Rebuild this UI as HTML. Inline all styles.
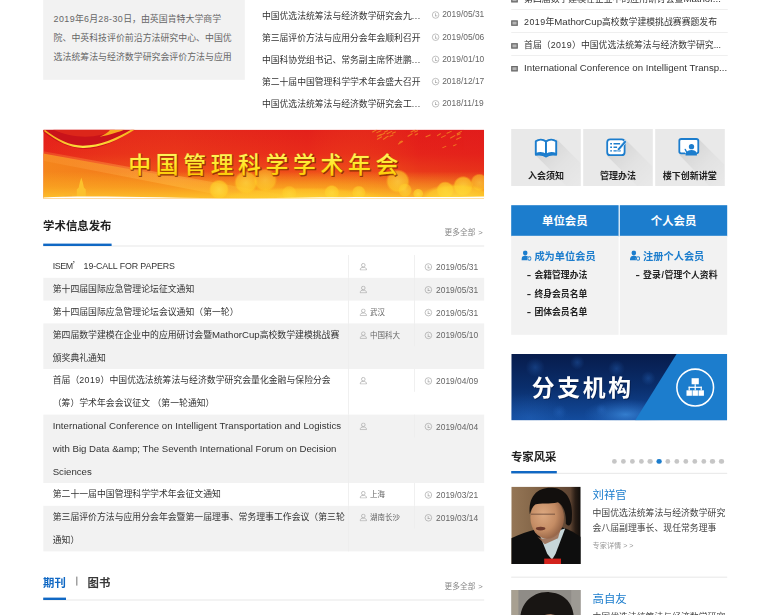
<!DOCTYPE html>
<html lang="zh-CN">
<head>
<meta charset="utf-8">
<title>中国优选法统筹法与经济数学研究会</title>
<style>
html,body{margin:0;padding:0;background:#fff;}
body{width:768px;height:615px;overflow:hidden;position:relative;}
#pg{position:absolute;left:0;top:0;width:1280px;height:1025px;transform:scale(0.6);transform-origin:0 0;
 font-family:"Liberation Sans","Noto Sans CJK SC",sans-serif;font-size:14.7px;color:#333;}
#pg *{box-sizing:border-box;}
.abs{position:absolute;}
.nw{white-space:nowrap;}
.dg{letter-spacing:0.7px;}
.la{font-size:1.09em;line-height:0;}
.el{letter-spacing:0.9px;}
.cap{letter-spacing:-0.7px;}
.cj{font-family:'Noto Sans CJK SC',sans-serif;line-height:0;}
/* top-left gray intro box */
#intro{left:71.8px;top:-40px;width:336px;height:173px;background:#f2f2f2;}
#intro p{position:absolute;left:17.5px;top:54.8px;margin:0;width:310px;line-height:32px;font-size:14.85px;color:#666;}
/* news list */
#news{left:436.5px;top:7.6px;width:370px;}
#news .r{height:37px;line-height:37px;position:relative;white-space:nowrap;color:#333;font-size:14.7px;}
#news .d{position:absolute;left:283.5px;top:-1.2px;font-size:14px;color:#666;}
.clk{display:inline-block;width:12px;height:12px;border:1.3px solid #999;border-radius:50%;position:relative;vertical-align:-1.5px;margin-right:5px;}
.clk:before{content:"";position:absolute;left:4px;top:2px;width:3px;height:4px;border-left:1.2px solid #999;border-bottom:1.2px solid #999;}
/* right list */
#rlist{left:851.5px;top:-22px;width:361px;}
#rlist .r{height:38.3px;line-height:41px;border-bottom:1px solid #e5e5e5;white-space:nowrap;font-size:14.75px;color:#333;padding-left:22px;position:relative;}
#rlist .r:last-child{border-bottom:0;}
#rlist .r i{position:absolute;left:0;top:17.3px;width:11.5px;height:9px;background:#b5b5b5;border:2.2px solid #6a6a6a;}
/* banner */
#banner{left:71.8px;top:215.5px;width:735px;height:115.5px;overflow:hidden;}
/* three buttons */
.btn3{top:214.5px;width:116px;height:95px;background:#e9e9e9;overflow:hidden;}
.btn3 span{position:absolute;left:0;width:100%;top:69px;text-align:center;font-weight:bold;font-size:15px;color:#222;line-height:20px;}
/* headings */
.hd{font-weight:bold;font-size:19px;color:#222;line-height:30px;white-space:nowrap;}
.more{font-size:12.8px;color:#888;white-space:nowrap;line-height:20px;word-spacing:1.5px;}
.hl{height:1.5px;background:#ebebeb;}
.hb{height:3.7px;background:#1068c4;}
/* table */
#tb{left:71.8px;top:425px;width:735px;}
#tb .row{position:relative;line-height:38px;}
#tb .row.g{background:#f2f2f2;}
#tb .t{padding-left:16px;width:500px;color:#333;font-size:14.75px;position:relative;top:0.2px;}
#tb .c2{position:absolute;left:508px;top:0;width:110px;height:38px;border-left:1px solid #e6e6e6;padding-left:18px;font-size:12.5px;color:#666;white-space:nowrap;line-height:40.4px;}
#tb .c3{position:absolute;left:618px;top:0;width:117px;height:38px;border-left:1px solid #e6e6e6;padding-left:17px;line-height:40.4px;font-size:14px;color:#666;white-space:nowrap;}
#tb .row .c2{height:100%;}
#tb .row.g .c2,#tb .row.g .c3{border-left-color:#ebebeb;}
#tb .clk{margin-right:7px;vertical-align:-0.6px;}
.usr{display:inline-block;width:13px;height:13px;position:relative;vertical-align:-2px;margin-right:5px;}
/* member box */
.tab{top:342px;height:51.5px;background:#1c7dcd;color:#fff;font-weight:bold;font-size:19px;text-align:center;line-height:54.5px;}
.pan{top:393px;height:165px;background:#f2f2f2;}
.pan .h{position:absolute;left:17.5px;top:20.7px;font-weight:bold;font-size:17px;color:#1c7dcd;white-space:nowrap;line-height:30px;}
.pi{vertical-align:-1px;margin-right:4.5px;}
.ds2{display:inline-block;width:12.5px;transform:scaleX(1.5);transform-origin:0 50%;}
.pan .li{position:absolute;left:26.5px;font-weight:bold;font-size:14.7px;color:#222;white-space:nowrap;line-height:30px;}
/* branch banner */
#branch{left:851.7px;top:589.5px;width:360.8px;height:111px;overflow:hidden;}
/* experts */
.dot{position:absolute;top:764.8px;width:8.4px;height:8.4px;border-radius:50%;background:#c6c6c6;}
.ph{width:116px;height:130px;overflow:hidden;}
.nm{font-size:19px;color:#1c7dcd;white-space:nowrap;line-height:30px;}
.ds{font-size:14.75px;color:#444;line-height:24.2px;width:232px;}
.dt{font-size:12px;color:#999;white-space:nowrap;line-height:20px;}
</style>
</head>
<body>
<div id="pg">

<!-- TOP LEFT -->
<div id="intro" class="abs"><p class="nw"><span class="dg">2019</span>年<span class="dg">6</span>月<span class="dg">28-30</span>日，由英国肯特大学商学<br>院、中英科技评价前沿方法研究中心、中国优<br>选法统筹法与经济数学研究会评价方法与应用</p></div>

<!-- NEWS -->
<div id="news" class="abs">
 <div class="r">中国优选法统筹法与经济数学研究会九<span class='el'>...</span><span class="d"><i class="clk"></i>2019/05/31</span></div>
 <div class="r">第三届评价方法与应用分会年会顺利召开<span class="d"><i class="clk"></i>2019/05/06</span></div>
 <div class="r">中国科协党组书记、常务副主席怀进鹏<span class='el'>...</span><span class="d"><i class="clk"></i>2019/01/10</span></div>
 <div class="r">第二十届中国管理科学学术年会盛大召开<span class="d"><i class="clk"></i>2018/12/17</span></div>
 <div class="r">中国优选法统筹法与经济数学研究会工<span class='el'>...</span><span class="d"><i class="clk"></i>2018/11/19</span></div>
</div>

<!-- RIGHT LIST -->
<div id="rlist" class="abs">
 <div class="r"><i></i>第四届数学建模在企业中的应用研讨会暨<span class="la">Mathor...</span></div>
 <div class="r"><i></i><span class="dg">2019</span>年<span class="la">MathorCup</span>高校数学建模挑战赛赛题发布</div>
 <div class="r"><i></i>首届（<span class="dg">2019</span>）中国优选法统筹法与经济数学研究...</div>
 <div class="r"><i></i><span class="la">International Conference on Intelligent Transp...</span></div>
</div>

<!-- BANNER -->
<div id="banner" class="abs">
<svg width="735" height="116" viewBox="0 0 735 116" style="position:absolute;left:0;top:0">
 <defs>
  <linearGradient id="bg1" x1="0" y1="0" x2="0" y2="1">
   <stop offset="0" stop-color="#e3201b"/><stop offset="0.35" stop-color="#e82b1a"/><stop offset="0.6" stop-color="#ee4a19"/><stop offset="0.8" stop-color="#f4801a"/><stop offset="1" stop-color="#faa81c"/>
  </linearGradient>
  <linearGradient id="bg2" x1="0" y1="0" x2="1" y2="0">
   <stop offset="0" stop-color="#e41c1c" stop-opacity="0.25"/><stop offset="0.3" stop-color="#f6851a" stop-opacity="0.12"/><stop offset="0.6" stop-color="#f6851a" stop-opacity="0"/><stop offset="0.85" stop-color="#e0181c" stop-opacity="0.35"/><stop offset="1" stop-color="#e0181c" stop-opacity="0.5"/>
  </linearGradient>
  <radialGradient id="bk" cx="0.5" cy="0.5" r="0.5">
   <stop offset="0" stop-color="#ffe445" stop-opacity="0.95"/><stop offset="0.8" stop-color="#ffd22a" stop-opacity="0.85"/><stop offset="1" stop-color="#ffc21e" stop-opacity="0"/>
  </radialGradient>
  <linearGradient id="sw" x1="0" y1="0" x2="1" y2="0">
   <stop offset="0" stop-color="#f7a81c"/><stop offset="0.45" stop-color="#ffe640"/><stop offset="1" stop-color="#f8b01c"/>
  </linearGradient>
  <linearGradient id="gold" x1="0" y1="0" x2="0" y2="1">
   <stop offset="0" stop-color="#fff666"/><stop offset="0.55" stop-color="#ffe622"/><stop offset="1" stop-color="#fbc000"/>
  </linearGradient>
  <linearGradient id="ray" x1="0" y1="0" x2="1" y2="0">
   <stop offset="0" stop-color="#ffa040" stop-opacity="0.25"/><stop offset="0.5" stop-color="#ffb650" stop-opacity="0.5"/><stop offset="1" stop-color="#ffb43a" stop-opacity="0.15"/>
  </linearGradient>
  <linearGradient id="yb" x1="0" y1="0" x2="0" y2="1"><stop offset="0" stop-color="#ffc428" stop-opacity="0"/><stop offset="0.55" stop-color="#ffc428" stop-opacity="0.38"/><stop offset="1" stop-color="#ffd030" stop-opacity="0.8"/></linearGradient>
  <linearGradient id="wedge" x1="0" y1="0" x2="1" y2="0">
   <stop offset="0" stop-color="#f58a1c" stop-opacity="0.95"/><stop offset="0.5" stop-color="#f4801a" stop-opacity="0.8"/><stop offset="1" stop-color="#f4801a" stop-opacity="0.3"/>
  </linearGradient>
 </defs>
 <rect width="735" height="116" fill="url(#bg1)"/>
 <rect width="735" height="116" fill="url(#bg2)"/>
 <polygon points="0,40 0,116 420,116" fill="url(#wedge)"/>
 <polygon points="0,36 0,52 330,116 440,116" fill="url(#ray)"/>
 <!-- top-left ribbon -->
 <path d="M0 0 L152 0 C120 22 90 34 64 32 C40 30 18 18 0 4 Z" fill="#c9131a"/>
 <path d="M16 0 L120 0 C95 14 55 18 16 0 Z" fill="#dc261a"/>
 <path d="M94 12 C112 9 126 4 136 0 L112 0 C108 5 102 9 94 12 Z" fill="#f8a81e"/>
 <path d="M2 3 C24 20 44 30 66 30.5 C94 31 126 18 153 0 L147 0 C122 15 94 27 66 27 C44 26.5 24 17 2 0 Z" fill="url(#sw)"/>
 <rect x="0" y="70" width="735" height="46" fill="url(#yb)"/>
 <!-- bokeh -->
 <g>
  <circle cx="293" cy="100" r="17" fill="url(#bk)" opacity="0.75"/>
  <circle cx="338" cy="88" r="20" fill="url(#bk)" opacity="0.7"/>
  <circle cx="370" cy="84" r="20" fill="url(#bk)" opacity="0.6"/>
  <circle cx="410" cy="106" r="13" fill="url(#bk)" opacity="0.5"/>
  <circle cx="481" cy="105" r="13" fill="url(#bk)" opacity="0.75"/>
  <circle cx="526" cy="105" r="12" fill="url(#bk)" opacity="0.7"/>
  <circle cx="591" cy="86" r="20" fill="url(#bk)" opacity="0.7"/>
  <circle cx="603" cy="101" r="12" fill="url(#bk)" opacity="0.6"/>
  <circle cx="625" cy="107" r="9" fill="url(#bk)" opacity="0.8"/>
  <circle cx="670" cy="101" r="15" fill="url(#bk)" opacity="0.75"/>
  <circle cx="700" cy="94" r="17" fill="url(#bk)" opacity="0.75"/>
  <circle cx="727" cy="88" r="15" fill="url(#bk)" opacity="0.6"/>
 </g>
 <!-- sparks top right -->
 <g stroke="#f59a22" stroke-width="1.7" stroke-linecap="round" opacity="0.7"><path d="M582 6 l5 -2 M557 16 l7 -4 M657 10 l5 -3 M573 7 l8 -4 M666 30 l5 -2 M592 24 l7 -4 M673 6 l7 -3 M620 9 l4 -2 M571 13 l4 -2 M690 9 l5 -2 M638 12 l7 -3 M594 21 l4 -2 M557 11 l6 -3 M613 4 l8 -4 M684 27 l4 -2 M664 13 l6 -3 M567 16 l5 -3 M549 4 l7 -4 M556 5 l7 -3 M569 4 l5 -2 M690 7 l7 -4 M608 11 l7 -4 M619 4 l5 -2 M578 11 l5 -2 M689 16 l7 -3 M561 10 l8 -4 M679 14 l7 -4"/></g>
 <!-- tower -->
 <path d="M56 116 L56 100 L59 97 L61 88 L63.5 80 L66 88 L68 97 L71 100 L71 116 Z" fill="#fcc22c"/>
 <path d="M36 116 L36 110 L48 108 L48 116 Z" fill="#f9b028" opacity="0.9"/>
 <!-- bottom wave -->
 <ellipse cx="690" cy="114" rx="62" ry="24" fill="url(#bk)" opacity="0.75"/>
 <ellipse cx="430" cy="116" rx="150" ry="20" fill="url(#bk)" opacity="0.45"/>
 <path d="M0 117 L0 113 C100 108 250 117 420 113.5 C560 111 660 113.5 735 111.5 L735 117 Z" fill="#fff"/>
 <text x="141.7" y="72" font-family="Liberation Sans, Noto Sans CJK SC, sans-serif" font-weight="500" font-size="38" letter-spacing="7.8" fill="#7a2a00" stroke="#7a2a00" stroke-width="1.2" opacity="0.8" transform="translate(1.4,2)">中国管理科学学术年会</text>
 <text x="141.7" y="72" font-family="Liberation Sans, Noto Sans CJK SC, sans-serif" font-weight="500" font-size="38" letter-spacing="7.8" fill="url(#gold)" stroke="#c86a00" stroke-width="0.7" paint-order="stroke">中国管理科学学术年会</text>
</svg>
</div>

<!-- 3 BUTTONS -->
<svg width="0" height="0" style="position:absolute"><defs>
 <linearGradient id="ls" x1="0" y1="0" x2="1" y2="1"><stop offset="0" stop-color="#000" stop-opacity="0.11"/><stop offset="0.55" stop-color="#000" stop-opacity="0.03"/><stop offset="1" stop-color="#000" stop-opacity="0"/></linearGradient>
</defs></svg>
<div class="abs btn3" style="left:852px"><svg class="abs" style="left:0;top:0" width="116" height="95" viewBox="0 0 116 95">
 <polygon points="76,17 116,57 116,95 92,95 41,44" fill="url(#ls)"/>
 <path d="M41 20.5 C46 17 53 17 58 21 L58 43 C53 39.5 46 39.5 41 42 Z" fill="#fff" stroke="#1c7dcd" stroke-width="3.2" stroke-linejoin="round"/>
 <path d="M75 20.5 C70 17 63 17 58 21 L58 43 C63 39.5 70 39.5 75 42 Z" fill="#fff" stroke="#1c7dcd" stroke-width="3.2" stroke-linejoin="round"/>
 <path d="M40 43 C47 42 54 42.5 58 46 C62 42.5 69 42 76 43" fill="none" stroke="#1c7dcd" stroke-width="3.2" stroke-linejoin="round"/>
</svg><span>入会须知</span></div>
<div class="abs btn3" style="left:972px"><svg class="abs" style="left:0;top:0" width="116" height="95" viewBox="0 0 116 95">
 <polygon points="70,17 116,63 116,95 90,95 40,45" fill="url(#ls)"/>
 <rect x="40" y="17.2" width="29" height="26.5" rx="5" fill="#fff" stroke="#1c7dcd" stroke-width="3"/>
 <g stroke="#1c7dcd" stroke-width="2.3"><path d="M45 24.5 h3 M50.5 24.5 h11 M45 30.5 h3 M50.5 30.5 h6 M45 36.5 h3 M50.5 36.5 h12"/></g>
 <path d="M69.5 18.5 L57.5 32.5 L56 37.5 L60.5 35.5 L72.5 21.5 Z" fill="#1c7dcd" stroke="#fff" stroke-width="1"/>
</svg><span>管理办法</span></div>
<div class="abs btn3" style="left:1091.5px"><svg class="abs" style="left:0;top:0" width="116" height="95" viewBox="0 0 116 95">
 <polygon points="73,17 116,60 116,95 90,95 40,43" fill="url(#ls)"/>
 <path d="M50 40.5 L43.5 40.5 Q40.2 40.5 40.2 37.5 L40.2 19.7 Q40.2 16.7 43.5 16.7 L68.5 16.7 Q71.8 16.7 71.8 19.7 L71.8 37.5 Q71.8 40.5 68.5 40.5" fill="#fff" stroke="#1c7dcd" stroke-width="3"/>
 <rect x="52" y="38" width="16" height="5" fill="#fff"/>
 <circle cx="60.5" cy="29.5" r="4.4" fill="#1c7dcd"/>
 <path d="M50.5 44 L50.5 40.5 C53 36 56 35 60.5 35 C65 35 68 36.5 69.5 40.5 L69.5 44 Z" fill="#1c7dcd"/>
 <path d="M50 34 L53 39.5" stroke="#1c7dcd" stroke-width="2.2" stroke-linecap="round"/>
</svg><span>楼下创新讲堂</span></div>

<!-- HEADING 1 -->
<div class="abs hd" style="left:71.8px;top:362px">学术信息发布</div>
<div class="abs more" style="left:741px;top:378.3px">更多全部 &gt;</div>
<div class="abs hl" style="left:71.8px;top:409px;width:735px"></div>
<div class="abs hb" style="left:71.8px;top:406px;width:114px"></div>

<!-- TABLE -->
<div id="tb" class="abs">
 <div class="row"><div class="t nw"><span class='cap'>ISEM</span><span class='cj' style='margin-right:3.5px'>’</span><span style='letter-spacing:-0.2px'>19-CALL FOR PAPERS</span></div><div class="c2"><svg class='usr' viewBox='0 0 13 13'><circle cx='6.5' cy='4' r='3' fill='none' stroke='#aaa' stroke-width='1.2'/><path d='M1.2 12 C1.2 8.6 3.5 7.6 6.5 7.6 C9.5 7.6 11.8 8.6 11.8 12 Z' fill='none' stroke='#aaa' stroke-width='1.2'/></svg></div><div class="c3"><i class="clk"></i>2019/05/31</div></div>
 <div class="row g"><div class="t nw">第十四届国际应急管理论坛征文通知</div><div class="c2"><svg class='usr' viewBox='0 0 13 13'><circle cx='6.5' cy='4' r='3' fill='none' stroke='#aaa' stroke-width='1.2'/><path d='M1.2 12 C1.2 8.6 3.5 7.6 6.5 7.6 C9.5 7.6 11.8 8.6 11.8 12 Z' fill='none' stroke='#aaa' stroke-width='1.2'/></svg></div><div class="c3"><i class="clk"></i>2019/05/31</div></div>
 <div class="row"><div class="t nw">第十四届国际应急管理论坛会议通知（第一轮）</div><div class="c2"><svg class='usr' viewBox='0 0 13 13'><circle cx='6.5' cy='4' r='3' fill='none' stroke='#aaa' stroke-width='1.2'/><path d='M1.2 12 C1.2 8.6 3.5 7.6 6.5 7.6 C9.5 7.6 11.8 8.6 11.8 12 Z' fill='none' stroke='#aaa' stroke-width='1.2'/></svg>武汉</div><div class="c3"><i class="clk"></i>2019/05/31</div></div>
 <div class="row g"><div class="t nw">第四届数学建模在企业中的应用研讨会暨<span class='la'>MathorCup</span>高校数学建模挑战赛<br>颁奖典礼通知</div><div class="c2"><svg class='usr' viewBox='0 0 13 13'><circle cx='6.5' cy='4' r='3' fill='none' stroke='#aaa' stroke-width='1.2'/><path d='M1.2 12 C1.2 8.6 3.5 7.6 6.5 7.6 C9.5 7.6 11.8 8.6 11.8 12 Z' fill='none' stroke='#aaa' stroke-width='1.2'/></svg>中国科大</div><div class="c3"><i class="clk"></i>2019/05/10</div></div>
 <div class="row"><div class="t nw">首届（<span class='dg'>2019</span>）中国优选法统筹法与经济数学研究会量化金融与保险分会<br>（筹）学术年会会议征文 （第一轮通知）</div><div class="c2"><svg class='usr' viewBox='0 0 13 13'><circle cx='6.5' cy='4' r='3' fill='none' stroke='#aaa' stroke-width='1.2'/><path d='M1.2 12 C1.2 8.6 3.5 7.6 6.5 7.6 C9.5 7.6 11.8 8.6 11.8 12 Z' fill='none' stroke='#aaa' stroke-width='1.2'/></svg></div><div class="c3"><i class="clk"></i>2019/04/09</div></div>
 <div class="row g"><div class="t nw"><span class="la"><span style="letter-spacing:0.06px">International Conference on Intelligent Transportation and Logistics</span><br>with Big Data &amp;amp; The Seventh International Forum on Decision<br>Sciences</span></div><div class="c2"><svg class='usr' viewBox='0 0 13 13'><circle cx='6.5' cy='4' r='3' fill='none' stroke='#aaa' stroke-width='1.2'/><path d='M1.2 12 C1.2 8.6 3.5 7.6 6.5 7.6 C9.5 7.6 11.8 8.6 11.8 12 Z' fill='none' stroke='#aaa' stroke-width='1.2'/></svg></div><div class="c3"><i class="clk"></i>2019/04/04</div></div>
 <div class="row"><div class="t nw">第二十一届中国管理科学学术年会征文通知</div><div class="c2"><svg class='usr' viewBox='0 0 13 13'><circle cx='6.5' cy='4' r='3' fill='none' stroke='#aaa' stroke-width='1.2'/><path d='M1.2 12 C1.2 8.6 3.5 7.6 6.5 7.6 C9.5 7.6 11.8 8.6 11.8 12 Z' fill='none' stroke='#aaa' stroke-width='1.2'/></svg>上海</div><div class="c3"><i class="clk"></i>2019/03/21</div></div>
 <div class="row g"><div class="t nw">第三届评价方法与应用分会年会暨第一届理事、常务理事工作会议（第三轮<br>通知）</div><div class="c2"><svg class='usr' viewBox='0 0 13 13'><circle cx='6.5' cy='4' r='3' fill='none' stroke='#aaa' stroke-width='1.2'/><path d='M1.2 12 C1.2 8.6 3.5 7.6 6.5 7.6 C9.5 7.6 11.8 8.6 11.8 12 Z' fill='none' stroke='#aaa' stroke-width='1.2'/></svg>湖南长沙</div><div class="c3"><i class="clk"></i>2019/03/14</div></div>
</div>

<!-- MEMBER -->
<div class="abs tab" style="left:851.7px;width:179.3px">单位会员</div>
<div class="abs tab" style="left:1032.8px;width:179.7px">个人会员</div>
<div class="abs pan" style="left:851.7px;width:179.3px"><div class="h"><svg class='pi' width='17' height='18' viewBox='0 0 16 16' preserveAspectRatio='none'><circle cx='6' cy='4.2' r='3.6' fill='#1c7dcd'/><path d='M0 15 C0 9.6 2.6 8.4 6 8.4 C8 8.4 9.4 8.8 10.4 9.8 C9 10.6 8.6 12.6 9.6 15 Z' fill='#1c7dcd'/><circle cx='12.6' cy='12.2' r='2.6' fill='none' stroke='#1c7dcd' stroke-width='1.5'/></svg>成为单位会员</div>
 <div class="li" style="top:51.2px"><b class="ds2">-</b>会籍管理办法</div><div class="li" style="top:81.5px"><b class="ds2">-</b>终身会员名单</div><div class="li" style="top:112px"><b class="ds2">-</b>团体会员名单</div></div>
<div class="abs pan" style="left:1032.8px;width:179.7px"><div class="h"><svg class='pi' width='17' height='18' viewBox='0 0 16 16' preserveAspectRatio='none'><circle cx='6' cy='4.2' r='3.6' fill='#1c7dcd'/><path d='M0 15 C0 9.6 2.6 8.4 6 8.4 C8 8.4 9.4 8.8 10.4 9.8 C9 10.6 8.6 12.6 9.6 15 Z' fill='#1c7dcd'/><circle cx='12.6' cy='12.2' r='2.6' fill='none' stroke='#1c7dcd' stroke-width='1.5'/></svg>注册个人会员</div>
 <div class="li" style="top:51.2px"><b class="ds2">-</b>登录<span style='margin:0 1.2px'>/</span>管理个人资料</div></div>

<!-- BRANCH -->
<div id="branch" class="abs">
<svg class="abs" style="left:0;top:0" width="360.8" height="111" viewBox="0 0 360 110" preserveAspectRatio="none">
 <defs>
  <linearGradient id="nb" x1="0" y1="0" x2="0" y2="1"><stop offset="0" stop-color="#071c4c"/><stop offset="0.5" stop-color="#0a2e6c"/><stop offset="1" stop-color="#134c9e"/></linearGradient>
  <radialGradient id="gl" cx="0.5" cy="0.5" r="0.5"><stop offset="0" stop-color="#3f8fe0" stop-opacity="0.75"/><stop offset="1" stop-color="#2a6fc8" stop-opacity="0"/></radialGradient>
  <radialGradient id="gl2" cx="0.5" cy="0.5" r="0.5"><stop offset="0" stop-color="#2f74d0" stop-opacity="0.32"/><stop offset="1" stop-color="#2a6fc8" stop-opacity="0"/></radialGradient>
 </defs>
 <rect width="360" height="110" fill="url(#nb)"/>
 <ellipse cx="190" cy="100" rx="70" ry="26" fill="url(#gl)"/>
 <ellipse cx="30" cy="105" rx="70" ry="40" fill="url(#gl2)"/>
 <circle cx="40" cy="22" r="16" fill="url(#gl2)"/><circle cx="110" cy="14" r="12" fill="url(#gl2)"/><circle cx="175" cy="24" r="14" fill="url(#gl2)"/><circle cx="228" cy="40" r="12" fill="url(#gl2)"/><circle cx="80" cy="96" r="12" fill="url(#gl2)"/><circle cx="150" cy="92" r="10" fill="url(#gl2)"/>
 <polygon points="275,0 360,0 360,110 206,110" fill="#1c7dcd"/>
 <circle cx="306" cy="55.5" r="30.5" fill="none" stroke="#fff" stroke-width="2.6"/>
 <g fill="#fff"><rect x="300" y="40" width="12" height="10"/><rect x="291.5" y="60" width="9" height="9"/><rect x="301.5" y="60" width="9" height="9"/><rect x="311.5" y="60" width="9" height="9"/>
 <rect x="305" y="50" width="2" height="10"/><rect x="295" y="54" width="22" height="2"/><rect x="295" y="54" width="2" height="6"/><rect x="315" y="54" width="2" height="6"/></g>
 <text x="34" y="69.5" font-family="Liberation Sans, Noto Sans CJK SC, sans-serif" font-weight="bold" font-size="38" letter-spacing="4.5" fill="#03143c" opacity="0.6" transform="translate(1.5,2)">分支机构</text>
 <text x="34" y="69.5" font-family="Liberation Sans, Noto Sans CJK SC, sans-serif" font-weight="bold" font-size="38" letter-spacing="4.5" fill="#fff">分支机构</text>
</svg></div>

<!-- EXPERTS -->
<div class="abs hd" style="left:851.5px;top:746.5px">专家风采</div>
<div class="abs hl" style="left:851.7px;top:788px;width:360.8px"></div>
<div class="abs hb" style="left:851.7px;top:785px;width:76px"></div>

<i class="dot" style="left:1020.0px"></i><i class="dot" style="left:1034.8px"></i><i class="dot" style="left:1049.7px"></i><i class="dot" style="left:1064.5px"></i><i class="dot" style="left:1079.4px"></i><i class="dot" style="left:1094.2px;background:#1c7dcd"></i><i class="dot" style="left:1109.1px"></i><i class="dot" style="left:1124.0px"></i><i class="dot" style="left:1138.8px"></i><i class="dot" style="left:1153.7px"></i><i class="dot" style="left:1168.5px"></i><i class="dot" style="left:1183.3px"></i><i class="dot" style="left:1198.2px"></i>
<div class="abs ph" style="left:851.7px;top:811px;height:129px"><svg width="116" height="129" viewBox="0 0 116 129">
 <defs><linearGradient id="p1b" x1="0" y1="0" x2="1" y2="0"><stop offset="0" stop-color="#957656"/><stop offset="0.3" stop-color="#86684a"/><stop offset="0.85" stop-color="#5e4432"/><stop offset="0.92" stop-color="#2a1e16"/><stop offset="1" stop-color="#0f0c0a"/></linearGradient>
 <radialGradient id="p1f" cx="0.38" cy="0.42" r="0.65"><stop offset="0" stop-color="#dca880"/><stop offset="0.6" stop-color="#c48c64"/><stop offset="1" stop-color="#8e5e42"/></radialGradient></defs>
 <rect width="116" height="129" fill="url(#p1b)"/>
 <path d="M0 129 L0 86 C14 80 28 74 42 71 L86 68 C98 72 108 78 116 84 L116 129 Z" fill="#0e0e0e"/>
 <path d="M48 82 L60 112 L68 122 L74 112 L90 70 Z" fill="#c6d6d9"/>
 <ellipse cx="60" cy="52" rx="28" ry="35" fill="url(#p1f)"/>
 <path d="M31 46 C28 16 44 1 68 2 C94 3 104 26 101 56 C100 64 96 68 91 62 C92 46 88 32 78 26 C64 30 48 26 40 30 C35 34 33 40 31 46 Z" fill="#120f0d"/>
 <rect x="55" y="120" width="28" height="9" fill="#d3221c"/>
 <ellipse cx="49" cy="70" rx="8" ry="3" fill="#5a261e" opacity="0.8"/>
 <path d="M33 46 h40" stroke="#6b4a3a" stroke-width="2" opacity="0.7"/>
 <path d="M40 80 C48 90 62 90 82 72 L78 86 L56 96 Z" fill="#9a6a4e" opacity="0.85"/>
</svg></div>
<div class="abs nm" style="left:987.5px;top:810px">刘祥官</div>
<div class="abs ds" style="left:987.5px;top:843.3px"><span class="nw">中国优选法统筹法与经济数学研究</span><br><span class="nw">会八届副理事长、现任常务理事</span></div>
<div class="abs dt" style="left:987.5px;top:899.5px">专家详情 <span style="letter-spacing:3px">&gt;&gt;</span></div>
<div class="abs hl" style="left:851.7px;top:961px;width:360.8px"></div>
<div class="abs ph" style="left:851.7px;top:983px;height:60px"><svg width="116" height="60" viewBox="0 0 116 60">
 <rect width="116" height="60" fill="#8f8c87"/>
 <rect x="0" y="0" width="12" height="60" fill="#a8a091"/>
 <rect x="100" y="0" width="16" height="60" fill="#9d9a94"/>
 <path d="M16 60 C10 24 36 2 64 4 C94 6 108 30 104 60 Z" fill="#181513"/>
 <path d="M40 60 C42 46 54 40 68 41 C82 42 90 50 90 60 Z" fill="#c99a7e"/>
</svg></div>
<div class="abs nm" style="left:987.5px;top:983.5px">高自友</div>
<div class="abs ds" style="left:987.5px;top:1016px"><span class="nw">中国优选法统筹法与经济数学研究</span></div>

<!-- BOTTOM HEADING -->
<div class="abs hd" style="left:71.8px;top:957px;color:#1068c4">期刊</div>
<div class="abs hd" style="left:146px;top:957px;color:#383838">图书</div>
<div class="abs" style="left:127px;top:961px;width:1.6px;height:15px;background:#8a8a8a"></div>
<div class="abs more" style="left:741px;top:967px">更多全部 &gt;</div>
<div class="abs hl" style="left:71.8px;top:999px;width:735px"></div>
<div class="abs hb" style="left:71.8px;top:996px;width:38px"></div>

</div>
</body>
</html>
